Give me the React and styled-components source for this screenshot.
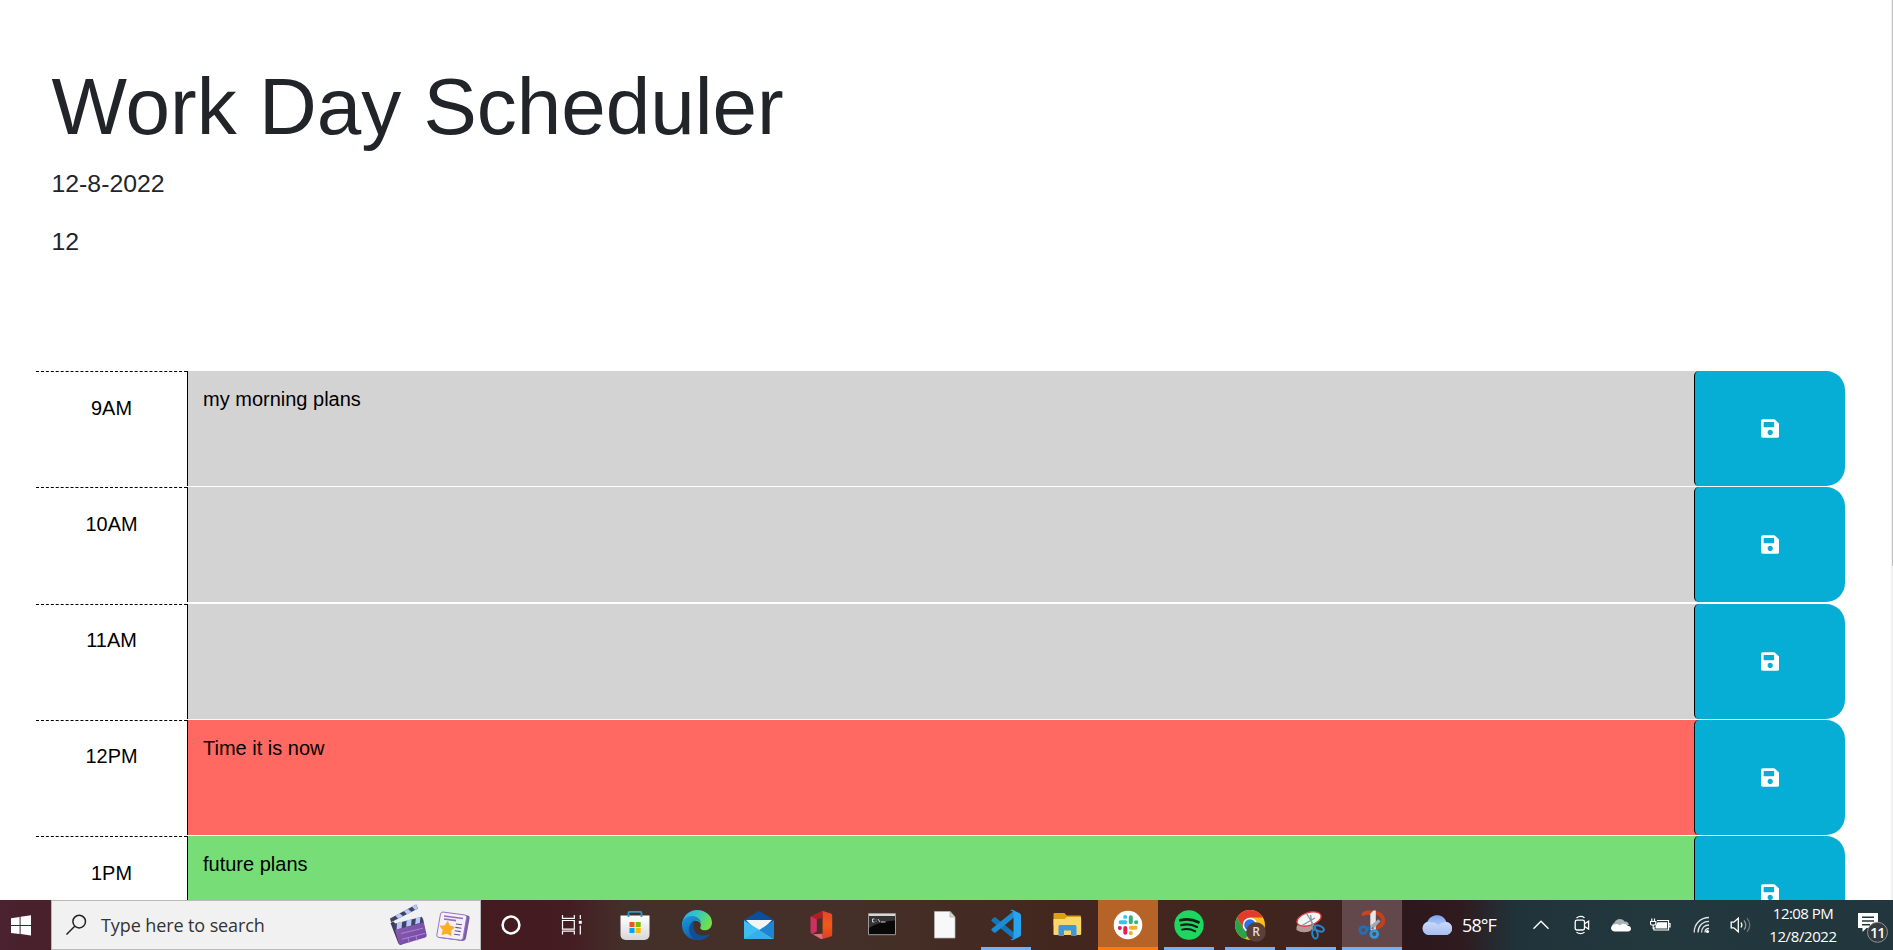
import React from "react";
import styled, { createGlobalStyle } from "styled-components";
import { FaSave } from "react-icons/fa";

const Global = createGlobalStyle`
  * { box-sizing: border-box; }
  body { margin: 0; background: #fff; overflow: hidden; font-family: "Liberation Sans", Arial, sans-serif; color: #212529; }
`;

const Screen = styled.div`
  height: 950px;
  display: flex;
  flex-direction: column;
  overflow: hidden;
`;

const Viewport = styled.div`
  height: 900px;
  display: flex;
  overflow: hidden;
`;

const Page = styled.main`
  flex: 1;
  min-width: 0;
  padding: 0 46px 0 36px;
`;

const Header = styled.header`
  height: 371px;
  padding: 59px 0 0 15.5px;
`;

const Title = styled.h1`
  margin: 0 0 10px;
  font-size: 80px;
  font-weight: 400;
  line-height: 96px;
`;

const Lead = styled.p`
  margin: 0 0 21px;
  font-size: 24.8px;
  line-height: 37px;
`;

const Row = styled.section`
  display: flex;
  height: 116.25px;
`;

const Hour = styled.div`
  width: 151px;
  height: 115.25px;
  padding-top: 20.5px;
  border-top: 1px dashed #000;
  text-align: center;
  font-size: 19.9px;
  line-height: 30px;
  color: #000;
`;

const fills = { past: "#d3d3d3", present: "#ff6961", future: "#77dd77" };

const Plan = styled.div`
  flex: 1;
  height: 115px;
  padding: 13px 15px;
  border-left: 1px solid #000;
  background: ${(p) => fills[p.$when]};
  font-size: 20px;
  line-height: 30px;
  color: #000;
`;

const SaveCell = styled.div`
  width: 151px;
  height: 115px;
  background: ${(p) => `linear-gradient(90deg, ${fills[p.$when]} 8px, #fff 8px)`};
`;

const SaveButton = styled.button`
  display: flex;
  align-items: center;
  justify-content: center;
  width: 151px;
  height: 115px;
  padding: 0;
  border: 0;
  border-left: 1px solid #000;
  border-radius: 5px 19px 19px 5px;
  background: #06aed5;
  color: #fff;
  svg { width: 18.4px; height: 21px; }
`;

const ScrollTrack = styled.div`
  width: 2px;
  background: #f1f1f1;
`;

const ScrollThumb = styled.div`
  width: 1px;
  height: 566px;
  margin-left: 1px;
  background: #c1c1c1;
`;

const Taskbar = styled.footer`
  display: flex;
  height: 50px;
  color: #fff;
  font-family: "Open Sans", "Noto Sans", sans-serif;
  background: linear-gradient(90deg, #4a2230 0, #48212b 51px, #421a20 481px, #441d22 570px, #44302a 625px, #443028 860px, #43271f 1060px, #40251f 1280px, #3a2020 1400px, #2c171d 1404px, #2f1a1e 1460px, #20333a 1515px, #22383d 1640px, #22373d 1893px);
`;

const StartButton = styled.div`
  display: flex;
  align-items: center;
  width: 51px;
  padding-left: 11px;
`;

const SearchBox = styled.div`
  display: flex;
  align-items: center;
  width: 430px;
  padding-left: 13px;
  border: 1px solid #b9b9b9;
  background: #f1f1f1;
  color: #333;
  svg { flex: none; }
`;

const SearchText = styled.span`
  width: 302px;
  padding: 0 0 1px 14px;
  font-size: 18px;
  letter-spacing: -0.1px;
  white-space: nowrap;
`;

const Highlights = styled.div`
  display: flex;
  align-items: center;
  gap: 6px;
  svg:last-child { margin-top: 4px; }
`;

const AppButton = styled.div`
  display: flex;
  flex-direction: column;
  align-items: center;
  width: ${(p) => p.$w}px;
  padding-top: 5px;
  background: ${(p) => p.$bg || "transparent"};
`;

const Underline = styled.div`
  width: ${(p) => (p.$wide ? "100%" : "50px")};
  height: 3px;
  margin-top: 2px;
  background: ${(p) => p.$color};
`;

const Weather = styled.div`
  display: flex;
  align-items: center;
  gap: 9px;
  width: 121px;
  padding-left: 19px;
  font-size: 18px;
  letter-spacing: -0.9px;
`;

const Tray = styled.div`
  display: flex;
  align-items: center;
  width: 239px;
`;

const TrayIcon = styled.div`
  display: flex;
  justify-content: center;
  width: ${(p) => p.$w}px;
`;

const Clock = styled.div`
  width: 82px;
  padding-top: 2px;
  text-align: center;
  font-size: 15px;
  line-height: 23px;
  white-space: nowrap;
`;

const ClockLine = styled.div`
  letter-spacing: ${(p) => p.$track}px;
`;

const Notices = styled.div`
  display: flex;
  align-items: center;
  flex: 1;
  padding: 6px 0 0 14px;
`;

const svg40 = { width: 40, height: 40, viewBox: "0 0 40 40", fill: "none" };

const WindowsLogo = () => (
  <svg width="20" height="21" viewBox="0 0 20 21" fill="#fff">
    <path d="M0 3.2 8.6 2v8H0zM9.6 1.8 20 .3V10H9.6zM0 11h8.6v8L0 17.9zM9.6 11H20v9.6L9.6 19.1z" />
  </svg>
);

const SearchIcon = () => (
  <svg width="22" height="22" viewBox="0 0 22 22" fill="none" stroke="#222" strokeWidth="1.5">
    <circle cx="14.2" cy="7.6" r="6.3" />
    <path d="M9.7 12.2 1.5 20.5" />
  </svg>
);

const Clapper = () => (
  <svg width="40" height="42" viewBox="0 0 40 42">
    <defs>
      <linearGradient id="clap" x1="0" y1="0" x2="1" y2="1">
        <stop offset="0" stopColor="#8a62ab" /><stop offset="1" stopColor="#7145ad" />
      </linearGradient>
    </defs>
    <path d="m1.500 19 3-1.500 5 6L13 40.500q-3 .8-3.800-1.400z" fill="#4a315f" />
    <path d="m5 22 29-7.700 3.700 17q0 1.800-1.400 2.200L12 40.800q-1.800.3-2.300-1.500z" fill="url(#clap)" />
    <path d="m3.500 20.200 29.500-7.500 1.500 5.800L5.500 26z" fill="#3e4463" />
    <path d="m8 19 5.200-1.400-.6 6.400-5 1.400zM17.600 16.500l5-1.400-.4 6.300-5 1.300zM27 13.900l4.400-1.200-.5 6.400-4.800 1.200z" fill="#b9c6fb" />
    <path d="M1 14.400 27.200.5l1.900 4-27 13.800z" fill="#3e4463" />
    <path d="m6.300 11.600 4.300-2.300 3.500 2.900-5 2.500zM14.800 7.100l4.200-2.200 3.600 3-4.700 2.400zM23 2.800 27.200.6 29 4.500l-3 1.400z" fill="#b9c6fb" />
    <path d="m12 29.500 22-5.300M13 35.200l23-5.800M19 34l1.300 4.800M27 32l1.200 4.600" stroke="#b58ad0" strokeWidth=".9" fill="none" />
  </svg>
);

const NewsPage = () => (
  <svg width="36" height="32" viewBox="0 0 36 32">
    <path d="m8 1.200 25 3.200q2 .5 1.600 2.500L31 27q-.8 3-3.500 3L5 27q-3-.7-2.500-3z" fill="#7c609e" />
    <path d="m8 1 22 3q2 .5 1.600 2.500L28 27.300q-.5 2-2.500 1.800L3.500 26.300Q1.400 25.800 1.800 24L5.500 3Q6 1 8 1z" fill="#f4effa" stroke="#9675c5" strokeWidth="1" />
    <path d="m9 5 19 2.500M9 8l12 1.600" stroke="#9270bb" strokeWidth="1.600" />
    <path d="m21 13 6 .8m-6.600 2.600 6 .8m-6.600 2.600 6 .8m-6.700 2.600 6 .8" stroke="#68518f" strokeWidth="1.100" />
    <path d="m12.600 11 1.900 4.200 4.600 1.200-3.500 3 .3 4.800-4.100-2.300-4.600 1.500 1.100-4.600-3-3.600 4.800-.3z" fill="#fcae24" stroke="#fcae24" strokeWidth="1.200" strokeLinejoin="round" />
  </svg>
);

const Cortana = () => (
  <svg {...svg40}><circle cx="20" cy="20" r="8.4" stroke="#fff" strokeWidth="2.500" /></svg>
);

const TaskView = () => (
  <svg {...svg40} stroke="#fff" strokeWidth="1.2">
    <path d="M10.500 10v3.300h11.800V10M10.500 29.500v-3.300h11.800v3.300M10.500 15.500h11.800v8.600H10.500zM28.300 10v4M28.300 20.500v9" />
    <path d="M26.800 15.800h3v3h-3z" fill="#fff" stroke="none" />
  </svg>
);

const Store = () => (
  <svg {...svg40}>
    <defs>
      <linearGradient id="bag" x1="0" y1="0" x2="0" y2="1">
        <stop offset="0" stopColor="#fff" /><stop offset="1" stopColor="#d7d7d7" />
      </linearGradient>
    </defs>
    <path d="M5.500 10.500h29V30a5 5 0 0 1-5 5h-19a5 5 0 0 1-5-5z" fill="url(#bag)" />
    <path d="M13.500 12V8q0-1.200 1.200-1.200h10.600q1.200 0 1.200 1.200v4" stroke="#2b9bcd" strokeWidth="1.800" />
    <path d="M14.500 17h5v5h-5z" fill="#f25022" /><path d="M20.700 17h5v5h-5z" fill="#7fba00" />
    <path d="M14.500 23h5v5h-5z" fill="#00a4ef" /><path d="M20.700 23h5v5h-5z" fill="#ffb900" />
  </svg>
);

const Edge = () => (
  <svg {...svg40}>
    <defs>
      <linearGradient id="edgeTop" x1="0" y1="0" x2="1" y2=".4">
        <stop offset="0" stopColor="#2aa9e0" /><stop offset=".45" stopColor="#30c3cf" /><stop offset="1" stopColor="#70df4b" />
      </linearGradient>
      <linearGradient id="edgeSide" x1="0" y1="0" x2=".6" y2="1">
        <stop offset="0" stopColor="#1b9ade" /><stop offset="1" stopColor="#0c59a4" />
      </linearGradient>
    </defs>
    <path d="M5 19C6 10.500 12.500 5 20 5c8.500 0 15 5.600 15 12.400 0 5-3.300 7.900-7.200 7.900-3 0-5.300-1.400-4.400-3.200 1.600-3.100-.6-6.300-4.700-6.600C13 15 7 16 5 21z" fill="url(#edgeTop)" />
    <path d="M5 20c0-5 4-9 9.600-9 4.900 0 9 2.700 9.500 7-1.500-2.600-4.400-3.400-6.500-2.500-3.700 1.600-4.400 5.900-2.600 9.300 2 4.300 6.400 7 11.300 6.500 2.600-.3 4.700-1 6.600-2.100C30 33 25 35.300 19.500 35 11 34.500 5 28 5 20z" fill="url(#edgeSide)" />
    <path d="M17.500 15.600c-7 2.800-7.700 14.500 1 19.300 5.800.8 11.300-1.700 14.300-5.900-8 3.600-15.400.6-16.300-6.500-.3-3 .2-5.300 1-6.900z" fill="#124f95" />
  </svg>
);

const Mail = () => (
  <svg {...svg40}>
    <path d="M5 15 18.500 6.700q1.500-.9 3 0L35 15v5H5z" fill="#0b4f9c" />
    <path d="M7 15h26l-10 10h-6z" fill="#f4f4f4" />
    <path d="M5 15.300 35 34H6q-1 0-1-1z" fill="#3dbdf3" />
    <path d="M35 15.300 20.300 24.900 35 34z" fill="#1e84d4" />
    <path d="m5 34 14.800-9.200L34 34z" fill="#34b1ec" />
  </svg>
);

const Office = () => (
  <svg {...svg40}>
    <defs>
      <linearGradient id="off" x1="0" y1="0" x2="0" y2="1">
        <stop offset="0" stopColor="#e3452c" /><stop offset=".5" stopColor="#ef5a17" /><stop offset="1" stopColor="#e13c24" />
      </linearGradient>
    </defs>
    <path d="m9.500 11.700 12.200-5.600 4 1.500-9.900 5.500v13.500L11.300 29q-1.800-.5-1.800-2.500z" fill="#cf315f" />
    <path d="M21.600 6 30 8.600q1.200.5 1.200 2v19q0 1.600-1.300 2L21.600 34z" fill="url(#off)" />
    <path d="m9.800 11.500 11.800-5.400v6.300l-5.800 2z" fill="#ad2021" />
    <path d="m11.700 29.300 9.900-.6V34q-1 .3-2-.3z" fill="#ed6778" />
  </svg>
);

const Terminal = () => (
  <svg {...svg40}>
    <path d="M6.500 8.500h27v21.200h-27z" fill="#080808" stroke="#999" />
    <path d="M7 9h26v2.200H7z" fill="#d6d6d6" />
    <path d="M7 11.500h26v4Q18 16 7 23z" fill="#333" />
    <path d="M12.500 14h-2v3h2m1.500-2.300v.5m0 1.300v.5M16 14l2 3m1 0h4.500" stroke="#ddd" strokeWidth=".9" />
  </svg>
);

const BlankFile = () => (
  <svg {...svg40}>
    <path d="M10.500 6.500h15.500l5 5.500v21H10.500z" fill="#f7f8f9" stroke="#b8b8b8" strokeWidth=".7" />
    <path d="M26 6.500V12h5z" fill="#d5d7d8" stroke="#aaa" strokeWidth=".7" />
  </svg>
);

const Code = () => (
  <svg {...svg40}>
    <path d="m5.700 14.500 2-1.900q1-.8 2 0L28 27.500v6.800L5.700 16.300q-1-.9 0-1.800z" fill="#1276b8" />
    <path d="m5.700 25.500 2 1.900q1 .8 2 0L28 12.500V5.700L5.700 23.700q-1 .9 0 1.800z" fill="#1b8bd3" />
    <path d="m27 5 6.700 3.200q1.300.7 1.300 2.200v19.200q0 1.500-1.300 2.200L27 35q-1.500.5-3-.9 1.800.7 3.500-1V7Q25.800 5.200 24 5.900q1.500-1.400 3-.9z" fill="#28a4ee" />
  </svg>
);

const Explorer = () => (
  <svg {...svg40}>
    <path d="M5.500 9q0-1 1-1h9.800l2.500 2.500H32q1 0 1 1V20H5.500z" fill="#d8a018" />
    <path d="M5.500 14h11.200l2-2H32q1.200 0 1.200 1.200v15.600Q33.200 30 32 30H6.500q-1 0-1-1z" fill="#fbd769" />
    <path d="M10.500 31V21.500q0-1.500 1.500-1.500h15q1.500 0 1.500 1.500V31H23v-5.500h-7V31z" fill="#3f97da" />
  </svg>
);

const Slack = () => (
  <svg {...svg40}>
    <circle cx="20" cy="20" r="14.300" fill="#fff" />
    <g strokeWidth="4" strokeLinecap="round">
      <path d="M12.600 17.300h4.700M17.200 11.900v.1" stroke="#36c5f0" />
      <path d="M22.800 12.200v5M28.200 17.300h-.1" stroke="#2eb67d" />
      <path d="M17.300 23v4.800M11.800 23h.1" stroke="#e01e5a" />
      <path d="M22.900 22.800h4.700M22.800 28.200v-.1" stroke="#ecb22e" />
    </g>
  </svg>
);

const Spotify = () => (
  <svg {...svg40} strokeLinecap="round">
    <circle cx="20" cy="20" r="14.700" fill="#1ed760" />
    <path d="M11.300 15.300q9.500-2.700 18.200 2" stroke="#101d15" strokeWidth="2.700" />
    <path d="M12.200 20.200q8.300-2.300 15.800 1.700" stroke="#101d15" strokeWidth="2.300" />
    <path d="M13 24.600q7-1.700 13.300 1.700" stroke="#101d15" strokeWidth="1.900" />
  </svg>
);

const Badge = styled.svg`
  overflow: visible;
  text { font-family: "Open Sans", sans-serif; font-weight: ${(p) => p.$weight || 400}; }
`;

const Chrome = () => (
  <Badge {...svg40} $weight={600}>
    <circle cx="20" cy="20" r="15" fill="#fbc116" />
    <path d="M7 12.500A15 15 0 0 1 33 12.500H20a7.500 7.500 0 0 0-6.500 3.750z" fill="#e33b2e" />
    <path d="M7 12.500 13.500 23.750 20 12.500z" fill="#e33b2e" />
    <path d="m7 12.500 6.500 11.250L20 27.500 15 34A15 15 0 0 1 7 12.500z" fill="#2ba24c" />
    <circle cx="20" cy="20" r="7.300" fill="#fff" />
    <circle cx="20" cy="20" r="5.800" fill="#2a72e8" />
    <circle cx="26" cy="27" r="9.800" fill="#5b4038" />
    <text x="26" y="31.400" textAnchor="middle" fontSize="12" fill="#e6dfdc">R</text>
  </Badge>
);

const Snip = () => (
  <svg {...svg40}>
    <path d="M5.500 22q2-6 8-6l9 6-3 4q-8 3-14-1z" fill="#b49a96" />
    <ellipse cx="18" cy="14" rx="12.500" ry="6.500" transform="rotate(-17 18 14)" fill="#f4f5f6" stroke="#d83a3b" strokeWidth="1.300" />
    <path d="m15.500 8.500 9 14.500M11 20.500 24 13M19.500 10l2.500 15" stroke="#8e959b" strokeWidth="1.400" />
    <ellipse cx="28.300" cy="23.500" rx="4.800" ry="2.600" transform="rotate(24 28.300 23.500)" stroke="#2587cc" strokeWidth="2" />
    <ellipse cx="24" cy="29" rx="2.700" ry="4.600" transform="rotate(-12 24 29)" stroke="#2587cc" strokeWidth="2" />
  </svg>
);

const SnipSketch = () => (
  <svg {...svg40}>
    <path d="M10 10.500C8.500 7 14 4.500 21 5.800l-1 4.500q-5-1.300-9 .7z" fill="#cc4325" />
    <path d="M21 7.500c11 .5 13.500 11 5.500 14.500q-2.500 1.300-5 .5" stroke="#c43f1c" strokeWidth="4" />
    <path d="m18.300 9 3-3.500h2.500V25h-5.500z" fill="#e6e7e8" />
    <path d="m18.500 20.500 8-6.300 2 2.300-7.500 7.500z" fill="#a5a9ad" />
    <path d="m12.500 23 6-2.500v4l-4 2z" fill="#1f66ae" />
    <circle cx="11.300" cy="25" r="3.400" stroke="#1f6fbd" strokeWidth="2.800" />
    <circle cx="22.300" cy="29" r="3.400" stroke="#3299df" strokeWidth="2.800" />
    <circle cx="20.500" cy="23.300" r="1.200" fill="#777d82" />
  </svg>
);

const WeatherCloud = () => (
  <svg width="32" height="22" viewBox="0 0 32 22">
    <defs>
      <linearGradient id="sky" x1="0" y1="0" x2="0" y2="1">
        <stop offset="0" stopColor="#7fa5ed" /><stop offset="1" stopColor="#dce7ff" />
      </linearGradient>
      <linearGradient id="front" x1="0" y1="0" x2="0" y2="1">
        <stop offset="0" stopColor="#c9dafb" /><stop offset="1" stopColor="#a6bdf0" />
      </linearGradient>
    </defs>
    <path d="M8 21a7 7 0 0 1-1.500-13.500C8 3.500 12 1.200 16 1.200c4.500 0 8 2.600 9.200 6.500A6.700 6.700 0 0 1 25 21z" fill="url(#sky)" />
    <path d="M7.500 21a6.500 6.500 0 1 1 3.400-12.300c2-.8 5.300.600 6.600 3.300C20 6.500 31.500 7 31 14.500c0 4-3 6.500-6.500 6.500z" fill="url(#front)" />
  </svg>
);

const Chevron = () => (
  <svg width="18" height="10" viewBox="0 0 18 10" fill="none" stroke="#fff" strokeWidth="1.400"><path d="m1.500 8.700 7.500-7.500 7.500 7.500" /></svg>
);

const MeetNow = () => (
  <svg width="16" height="20" viewBox="0 0 16 20" fill="none" stroke="#fff" strokeWidth="1.300">
    <rect x="1.200" y="5.200" width="9.300" height="9.800" rx="1.800" />
    <path d="m10.600 8.700 4-2.500v7.800l-4-2.500M2.500 3Q6.500 0 10.500 2.700M2.500 17.300q4 2.600 8 0" />
  </svg>
);

const OneDrive = () => (
  <svg width="20" height="14" viewBox="0 0 20 14">
    <path d="M4 12A4 4 0 0 1 3.500 4.500C5 1 10.500-.500 13.500 3.500c2-.5 3.500.500 4.500 3l-9 6z" fill="#a9b3b5" />
    <path d="M3.500 13.500c-4.500-.5-4.500-6-.5-7C5 5.500 7.500 6 9 7.500c1.500-2.500 6-2.500 7.300.2C18 7.500 20 8.500 20 10.700c0 1.800-1.500 2.800-3 2.800z" fill="#fff" />
  </svg>
);

const Battery = () => (
  <svg width="21" height="14" viewBox="0 0 21 14" fill="none" stroke="#fff" strokeWidth="1.200">
    <path d="M7 2.500h11.500V12H4V9M18.500 5.500h1.500v3.500h-1.500" />
    <path d="M7.500 4.200H17v6.200H5.500V8z" fill="#fff" stroke="none" />
    <path d="M1.800.5v3M4.500.5v3M.5 3.500h5.300v2q0 1.500-1.500 1.500H2Q.5 7 .5 5.500zM3.200 7v3.500H4" />
  </svg>
);

const Wifi = () => (
  <svg width="18" height="18" viewBox="0 0 18 18" fill="none" strokeWidth="1.300" stroke="#dfe4e5">
    <path d="M1.200 16.500C1.200 8 7.500 1.500 16 1.500M5 16.500C5 10 9.600 5.300 16 5.300M8.600 16.500c0-4.500 3-7.500 7.400-7.500" />
    <path d="M12 16.500c0-2.500 1.600-4 4-4" /><circle cx="14.500" cy="15.500" r="1.600" fill="#fff" stroke="none" />
  </svg>
);

const Speaker = () => (
  <svg width="22" height="18" viewBox="0 0 22 18" fill="none" stroke="#fff" strokeWidth="1.300">
    <path d="M1.200 6.200h2.600l4.500-4v13.600l-4.500-4H1.200zM11 6.500q1.700 2.500 0 5" />
    <path d="M14 4.300q3.500 4.700 0 9.400" stroke="#8c9a9d" /><path d="M17 2.200q5.500 6.800 0 13.600" stroke="#69797d" />
  </svg>
);

const Messages = () => (
  <Badge width="34" height="34" viewBox="0 0 34 34" fill="none" $weight={600}>
    <path d="M0 2h20v15H8.500L4.500 21v-4H0z" fill="#fff" />
    <path d="M4 6.200h12M4 10h12M4 13.800h8" stroke="#22373d" strokeWidth="1.400" />
    <circle cx="19.500" cy="21.300" r="10" fill="#353b3d" stroke="#8b9496" />
    <text x="19.300" y="26.500" textAnchor="middle" fontSize="14.500" letterSpacing="-1" fill="#fff">11</text>
  </Badge>
);

const BLUE = "#76b0f2";
const apps = [
  { w: 60, icon: Cortana }, { w: 62, icon: TaskView }, { w: 63, icon: Store }, { w: 62, icon: Edge },
  { w: 62, icon: Mail }, { w: 61, icon: Office }, { w: 62, icon: Terminal }, { w: 62, icon: BlankFile },
  { w: 62, icon: Code, line: BLUE }, { w: 61, icon: Explorer },
  { w: 60, icon: Slack, bg: "#b56327", line: "#ff7a0c", wide: true },
  { w: 62, icon: Spotify, line: BLUE }, { w: 60, icon: Chrome, line: BLUE }, { w: 62, icon: Snip, line: BLUE },
  { w: 60, icon: SnipSketch, bg: "#62484a", line: BLUE, wide: true },
];

const tray = [
  { w: 36, icon: Chevron }, { w: 45, icon: MeetNow }, { w: 33, icon: OneDrive },
  { w: 47, icon: Battery }, { w: 35, icon: Wifi }, { w: 43, icon: Speaker },
];

const hours = [
  { label: "9AM", when: "past", text: "my morning plans" },
  { label: "10AM", when: "past", text: "" },
  { label: "11AM", when: "past", text: "" },
  { label: "12PM", when: "present", text: "Time it is now" },
  { label: "1PM", when: "future", text: "future plans" },
];

export default function App() {
  return (
    <Screen>
      <Global />
      <Viewport>
        <Page>
          <Header>
            <Title>Work Day Scheduler</Title>
            <Lead>12-8-2022</Lead>
            <Lead>12</Lead>
          </Header>
          {hours.map((h) => (
            <Row key={h.label}>
              <Hour>{h.label}</Hour>
              <Plan $when={h.when}>{h.text}</Plan>
              <SaveCell $when={h.when}>
                <SaveButton aria-label="Save"><FaSave /></SaveButton>
              </SaveCell>
            </Row>
          ))}
        </Page>
        <ScrollTrack><ScrollThumb /></ScrollTrack>
      </Viewport>
      <Taskbar>
        <StartButton><WindowsLogo /></StartButton>
        <SearchBox>
          <SearchIcon />
          <SearchText>Type here to search</SearchText>
          <Highlights>
            <Clapper />
            <NewsPage />
          </Highlights>
        </SearchBox>
        {apps.map(({ w, icon: Icon, bg, line, wide }, i) => (
          <AppButton key={i} $w={w} $bg={bg}>
            <Icon />
            {line && <Underline $color={line} $wide={wide} />}
          </AppButton>
        ))}
        <Weather><WeatherCloud />58°F</Weather>
        <Tray>
          {tray.map(({ w, icon: Icon }, i) => (
            <TrayIcon key={i} $w={w}><Icon /></TrayIcon>
          ))}
        </Tray>
        <Clock>
          <ClockLine $track={-0.55}>12:08 PM</ClockLine>
          <ClockLine $track={-0.4}>12/8/2022</ClockLine>
        </Clock>
        <Notices><Messages /></Notices>
      </Taskbar>
    </Screen>
  );
}
